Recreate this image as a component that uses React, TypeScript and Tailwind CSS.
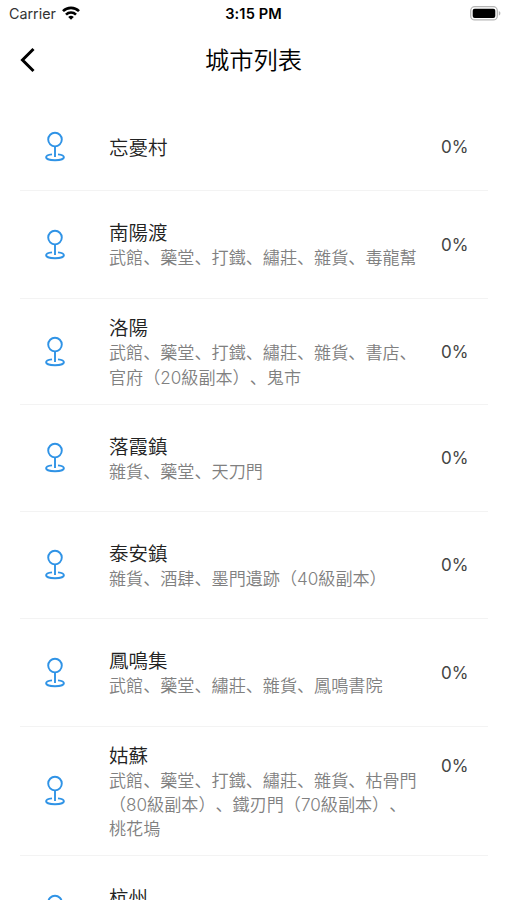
interface City {
  name: string
  places?: string
  progress: number
  rowClass: string
  progressClass?: string
}

const cities: City[] = [
  { name: '忘憂村', progress: 0, rowClass: 'h-[88px]' },
  { name: '南陽渡', places: '武館、藥堂、打鐵、繡莊、雜貨、毒龍幫', progress: 0, rowClass: 'h-[108px]' },
  { name: '洛陽', places: '武館、藥堂、打鐵、繡莊、雜貨、書店、官府（20級副本）、鬼市', progress: 0, rowClass: 'h-[106px]' },
  { name: '落霞鎮', places: '雜貨、藥堂、天刀門', progress: 0, rowClass: 'h-[107px]' },
  { name: '泰安鎮', places: '雜貨、酒肆、墨門遺跡（40級副本）', progress: 0, rowClass: 'h-[107px]' },
  { name: '鳳鳴集', places: '武館、藥堂、繡莊、雜貨、鳳鳴書院', progress: 0, rowClass: 'h-[108px]' },
  {
    name: '姑蘇',
    places: '武館、藥堂、打鐵、繡莊、雜貨、枯骨門（80級副本）、鐵刃門（70級副本）、桃花塢',
    progress: 0,
    rowClass: 'h-[129px]',
    progressClass: 'self-start mt-[27px]'
  },
  { name: '杭州', places: '\u00a0', progress: 0, rowClass: 'h-[108px]' }
]

function PinIcon() {
  return (
    <svg width="20" height="32" viewBox="0 0 20 32" fill="none" stroke="#2f93e6" strokeWidth="1.9">
      <circle cx="10" cy="8.6" r="6.8" />
      <path d="M10 15.500v10.500" />
      <path d="M7 23.400c-3.500.4-5.900 1.500-5.900 2.900 0 1.700 4 3 8.900 3s8.900-1.300 8.900-3c0-1.400-2.400-2.500-5.900-2.900" />
    </svg>
  )
}

function StatusBar() {
  return (
    <div className="grid h-7 shrink-0 grid-cols-3 items-center px-[7px] font-[Inter,sans-serif] text-[14.300px]">
      <div className="flex items-center gap-[6px] pl-[2px] text-[#333]">
        <span>Carrier</span>
        <svg className="-mt-[2px]" width="18" height="14" viewBox="0 0 18 14" fill="none" stroke="#000" strokeWidth="2.600">
          <path d="M1 5.200a11.300 11.300 0 0 1 16 0" />
          <path d="M4 8.600a7 7 0 0 1 10 0" />
          <path d="M9 13.800 6.200 11a4 4 0 0 1 5.600 0z" fill="#000" stroke="none" />
        </svg>
      </div>
      <div className="pt-px text-center text-[14.600px] font-semibold tracking-[0.1px] whitespace-nowrap text-black">3:15 PM</div>
      <svg className="-mt-[2px] -mr-px justify-self-end" width="31" height="15" viewBox="0 0 31 15">
        <rect x="0.700" y="0.700" width="26.600" height="13.200" rx="4" fill="#fff" stroke="#b5b5b5" strokeWidth="1.300" />
        <rect x="2.700" y="2.700" width="22.600" height="9.200" rx="2" fill="#000" />
        <path d="M28.800 5v4.600c1-.4 1.600-1.300 1.600-2.300s-.6-1.900-1.600-2.300z" fill="#b5b5b5" />
      </svg>
    </div>
  )
}

function CityRow({ city }: { city: City }) {
  return (
    <li className={`mr-[19px] ml-5 flex shrink-0 items-center border-b border-[#f3f3f3] ${city.rowClass}`}>
      <div className="ml-[25px] w-[64px] shrink-0">
        <PinIcon />
      </div>
      <div className="w-[312px] shrink-0 pt-[2px]">
        <h2 className="text-[19.500px] leading-[26px] font-[350] text-[#222]">{city.name}</h2>
        {city.places && (
          <p className="text-[17.100px] leading-[24.300px] font-[350] text-[#808080]">{city.places}</p>
        )}
      </div>
      <span className={`ml-[20px] font-[Inter,sans-serif] text-[17px] leading-6 text-[#444] ${city.progressClass ?? ''}`}>
        {city.progress}%
      </span>
    </li>
  )
}

export default function App() {
  return (
    <div
      lang="zh-Hans"
      className="flex h-[900px] w-[507px] flex-col overflow-hidden bg-white font-[Inter,'Noto_Sans_CJK_SC',sans-serif] [text-spacing-trim:space-all]"
    >
      <StatusBar />
      <header className="grid h-[64px] shrink-0 grid-cols-[60px_1fr_60px] items-center">
        <button className="pl-5" aria-label="返回">
          <svg width="16" height="26" viewBox="0 0 16 26" fill="none" stroke="#000" strokeWidth="3">
            <path d="M13.500 2 2.500 13 13.500 24" />
          </svg>
        </button>
        <h1 className="text-center text-[24.300px] leading-8 font-[350] text-black">城市列表</h1>
      </header>
      <ul className="flex flex-col pt-[11px]">
        {cities.map((city) => (
          <CityRow key={city.name} city={city} />
        ))}
      </ul>
    </div>
  )
}
